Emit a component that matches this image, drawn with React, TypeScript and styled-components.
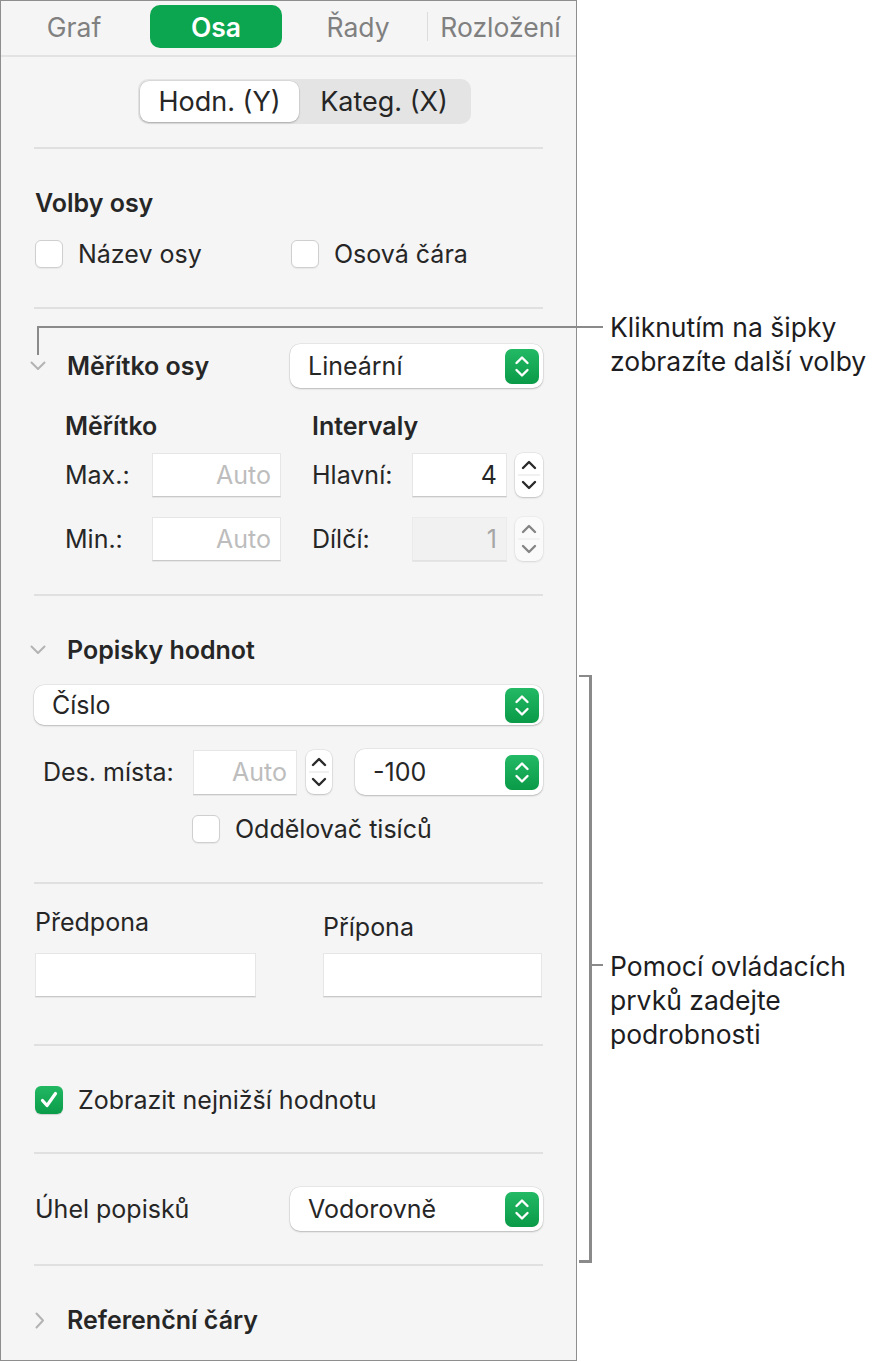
import React from 'react';
import styled, { createGlobalStyle } from 'styled-components';

const GlobalStyle = createGlobalStyle`
  html, body { margin: 0; padding: 0; background: #ffffff; }
  body { font-family: Inter, "Noto Sans", "Liberation Sans", sans-serif; color: #262626; -webkit-font-smoothing: antialiased; }
  * { box-sizing: border-box; }
`;

const Stage = styled.div`
  position: relative;
  width: 884px;
  height: 1362px;
`;

const Panel = styled.div`
  width: 577px;
  height: 1361px;
  border: 1px solid #8e8e8e;
  background: #f5f5f5;
  display: flex;
  flex-direction: column;
`;

const TabBar = styled.div`
  display: flex;
  align-items: center;
  gap: 10px;
  height: 56px;
  padding: 0 6px 0 7px;
  border-bottom: 2px solid #e3e3e3;
`;

const Tab = styled.div<{ $active?: boolean; $grow?: boolean }>`
  width: ${(p) => (p.$grow ? 'auto' : '132px')};
  flex: ${(p) => (p.$grow ? '1' : '0 0 auto')};
  height: 43px;
  margin-top: -3px;
  border-radius: 10px;
  display: flex;
  align-items: center;
  justify-content: center;
  font-size: 26.5px;
  font-weight: ${(p) => (p.$active ? 600 : 400)};
  color: ${(p) => (p.$active ? '#ffffff' : '#808080')};
  background: ${(p) => (p.$active ? '#0ba64f' : 'transparent')};
`;

const TabDivider = styled.div`
  width: 1px;
  height: 29px;
  margin: -3px -7px 0 -7px;
  background: #dcdcdc;
`;

const Content = styled.div`
  display: flex;
  flex-direction: column;
  padding: 0 33px;
`;

const Segmented = styled.div`
  align-self: flex-start;
  margin: 22px 0 0 104px;
  display: flex;
  height: 45px;
  padding: 2px;
  border-radius: 10px;
  background: #e4e4e4;
`;

const Segment = styled.div<{ $selected?: boolean; $w: number }>`
  width: ${(p) => p.$w}px;
  display: flex;
  align-items: center;
  justify-content: center;
  border-radius: 9px;
  font-size: 27px;
  color: #262626;
  background: ${(p) => (p.$selected ? '#ffffff' : 'transparent')};
  box-shadow: ${(p) => (p.$selected ? '0 1px 2px rgba(0,0,0,0.22), 0 0 0 0.5px rgba(0,0,0,0.08)' : 'none')};
`;

const Rule = styled.div<{ $mt: number }>`
  height: 2px;
  margin-top: ${(p) => p.$mt}px;
  background: #e0e0e0;
`;

const Row = styled.div<{ $mt: number; $h: number; $pl?: number }>`
  display: flex;
  align-items: center;
  height: ${(p) => p.$h}px;
  margin-top: ${(p) => p.$mt}px;
  padding-left: ${(p) => p.$pl ?? 0}px;
`;

const SectionTitle = styled.div`
  font-size: 25px;
  font-weight: 600;
  color: #262626;
`;

const Label = styled.div<{ $w?: number }>`
  font-size: 25px;
  color: #262626;
  ${(p) => (p.$w ? `width: ${p.$w}px; flex: 0 0 auto;` : '')}
`;

const CheckItem = styled.div<{ $w?: number }>`
  display: flex;
  align-items: center;
  gap: 15px;
  ${(p) => (p.$w ? `width: ${p.$w}px;` : '')}
`;

const Box = styled.div<{ $checked?: boolean }>`
  width: 28px;
  height: 28px;
  flex: 0 0 auto;
  border-radius: 6px;
  display: flex;
  align-items: center;
  justify-content: center;
  background: ${(p) => (p.$checked ? 'linear-gradient(#22b862, #0b9c4a)' : '#ffffff')};
  border: ${(p) => (p.$checked ? 'none' : '1px solid #cfcfcf')};
  box-shadow: ${(p) => (p.$checked ? '0 1px 1px rgba(0,0,0,0.15)' : '0 1px 1px rgba(0,0,0,0.06)')};
`;

const Disclosure = styled.div<{ $w?: number; $ml?: number }>`
  display: flex;
  align-items: center;
  width: ${(p) => p.$w ?? 37}px;
  margin-left: ${(p) => p.$ml ?? -4}px;
`;

const Popup = styled.div<{ $w?: number }>`
  display: flex;
  align-items: center;
  justify-content: space-between;
  height: 100%;
  ${(p) => (p.$w ? `width: ${p.$w}px;` : 'flex: 1;')}
  margin-left: auto;
  padding: 0 4px 0 18px;
  border-radius: 10px;
  background: #ffffff;
  box-shadow: 0 1px 2px rgba(0,0,0,0.2), 0 0 0 0.5px rgba(0,0,0,0.1);
  font-size: 25px;
  color: #262626;
`;

const GreenButton = styled.div`
  width: 34px;
  height: 35px;
  border-radius: 7px;
  background: linear-gradient(#23b965, #0a9a48);
  display: flex;
  align-items: center;
  justify-content: center;
`;

const ScaleRow = styled.div<{ $mt: number; $h: number }>`
  display: grid;
  grid-template-columns: 87px 129px 31px 100px 95px 8px 28px;
  align-items: center;
  height: ${(p) => p.$h}px;
  margin-top: ${(p) => p.$mt}px;
  padding-left: 31px;
`;

const Spacer = styled.div``;

const Field = styled.div<{ $w?: number; $disabled?: boolean; $h?: number }>`
  height: ${(p) => p.$h ?? 44}px;
  ${(p) => (p.$w ? `width: ${p.$w}px; flex: 0 0 auto;` : 'width: 100%;')}
  display: flex;
  align-items: center;
  justify-content: flex-end;
  padding-right: 9px;
  background: ${(p) => (p.$disabled ? '#f1f1f1' : '#ffffff')};
  border: 1px solid ${(p) => (p.$disabled ? '#ebebeb' : '#e6e6e6')};
  border-bottom: 1px solid ${(p) => (p.$disabled ? '#e2e2e2' : '#c9c9c9')};
  box-shadow: 0 1px 0 rgba(0,0,0,0.06);
  font-size: 25px;
  color: ${(p) => (p.$disabled ? '#a6a6a6' : '#262626')};
`;

const Placeholder = styled.span`
  color: #bdbdbd;
`;

const StepperBox = styled.div<{ $disabled?: boolean; $w?: number; $ml?: number }>`
  width: ${(p) => p.$w ?? 28}px;
  height: 44px;
  flex: 0 0 auto;
  margin-left: ${(p) => p.$ml ?? 0}px;
  border-radius: 8px;
  background: #ffffff;
  box-shadow: 0 1px 2px rgba(0,0,0,0.18), 0 0 0 0.5px rgba(0,0,0,0.1);
  opacity: ${(p) => (p.$disabled ? 0.55 : 1)};
  display: flex;
  align-items: center;
  justify-content: center;
`;

const AffixGrid = styled.div`
  display: grid;
  grid-template-columns: 221px 219px;
  column-gap: 67px;
  margin-top: 23px;
  padding-left: 1px;
`;

const AffixLabel = styled.div<{ $shift?: number }>`
  height: 30px;
  display: flex;
  align-items: center;
  font-size: 25px;
  color: #262626;
  margin-top: ${(p) => p.$shift ?? 0}px;
  margin-bottom: ${(p) => 16 - (p.$shift ?? 0)}px;
`;

const Bottom = styled.div`
  flex: 1;
`;

/* annotation layer */
const Line = styled.div<{ $x: number; $y: number; $w: number; $h: number }>`
  position: absolute;
  left: ${(p) => p.$x}px;
  top: ${(p) => p.$y}px;
  width: ${(p) => p.$w}px;
  height: ${(p) => p.$h}px;
  background: #8a8a8a;
`;

const Callout = styled.div<{ $y: number }>`
  position: absolute;
  left: 610px;
  top: ${(p) => p.$y}px;
  font-family: Inter, "Noto Sans", sans-serif;
  font-size: 26.5px;
  line-height: 34px;
  color: #1d1d1f;
`;

const ChevronDown = () => (
  <svg width="16" height="10" viewBox="0 0 16 10">
    <path d="M1.5 1.5 L8 8 L14.5 1.5" fill="none" stroke="#b3b3b3" strokeWidth="2" strokeLinecap="round" strokeLinejoin="round" />
  </svg>
);

const ChevronRight = () => (
  <svg width="10" height="17" viewBox="0 0 10 17">
    <path d="M1.5 1.5 L8 8.5 L1.5 15.5" fill="none" stroke="#b3b3b3" strokeWidth="2" strokeLinecap="round" strokeLinejoin="round" />
  </svg>
);

const UpDown = () => (
  <svg width="34" height="35" viewBox="0 0 34 35">
    <path d="M11.5 14 L17 8.5 L22.5 14" fill="none" stroke="#ffffff" strokeWidth="2.4" strokeLinecap="round" strokeLinejoin="round" />
    <path d="M11.5 21 L17 26.5 L22.5 21" fill="none" stroke="#ffffff" strokeWidth="2.4" strokeLinecap="round" strokeLinejoin="round" />
  </svg>
);

const StepArrows = ({ w = 28 }: { w?: number }) => (
  <svg width={w} height="44" viewBox={`0 0 ${w} 44`}>
    <path d={`M${w / 2 - 6} 15 L${w / 2} 9 L${w / 2 + 6} 15`} fill="none" stroke="#2a2a2a" strokeWidth="2.4" strokeLinecap="round" strokeLinejoin="round" />
    <line x1="3" y1="22" x2={w - 3} y2="22" stroke="#e2e2e2" strokeWidth="1" />
    <path d={`M${w / 2 - 6} 29 L${w / 2} 35 L${w / 2 + 6} 29`} fill="none" stroke="#2a2a2a" strokeWidth="2.4" strokeLinecap="round" strokeLinejoin="round" />
  </svg>
);

const Check = () => (
  <svg width="22" height="22" viewBox="0 0 22 22">
    <path d="M4.5 11.5 L9 16.5 L17.5 4.5" fill="none" stroke="#ffffff" strokeWidth="3.2" strokeLinecap="round" strokeLinejoin="round" />
  </svg>
);

export default function App() {
  return (
    <Stage>
      <GlobalStyle />
      <Panel>
        <TabBar>
          <Tab>Graf</Tab>
          <Tab $active>Osa</Tab>
          <Tab>Řady</Tab>
          <TabDivider />
          <Tab $grow>Rozložení</Tab>
        </TabBar>
        <Content>
          <Segmented>
            <Segment $selected $w={159}>Hodn. (Y)</Segment>
            <Segment $w={170}>Kateg. (X)</Segment>
          </Segmented>
          <Rule $mt={23} />

          <Row $mt={39} $h={30} $pl={1}>
            <SectionTitle>Volby osy</SectionTitle>
          </Row>
          <Row $mt={16} $h={40} $pl={1}>
            <CheckItem $w={256}>
              <Box />
              <Label>Název osy</Label>
            </CheckItem>
            <CheckItem>
              <Box />
              <Label>Osová čára</Label>
            </CheckItem>
          </Row>
          <Rule $mt={33} />

          <Row $mt={35} $h={44}>
            <Disclosure><ChevronDown /></Disclosure>
            <SectionTitle>Měřítko osy</SectionTitle>
            <Popup $w={253}>
              Lineární
              <GreenButton><UpDown /></GreenButton>
            </Popup>
          </Row>

          <ScaleRow $mt={23} $h={30}>
            <SectionTitle style={{ gridColumn: '1 / 3' }}>Měřítko</SectionTitle>
            <Spacer />
            <SectionTitle style={{ gridColumn: '4 / 8' }}>Intervaly</SectionTitle>
          </ScaleRow>
          <ScaleRow $mt={12} $h={44}>
            <Label>Max.:</Label>
            <Field><Placeholder>Auto</Placeholder></Field>
            <Spacer />
            <Label>Hlavní:</Label>
            <Field>4</Field>
            <Spacer />
            <StepperBox><StepArrows /></StepperBox>
          </ScaleRow>
          <ScaleRow $mt={20} $h={44}>
            <Label>Min.:</Label>
            <Field><Placeholder>Auto</Placeholder></Field>
            <Spacer />
            <Label>Dílčí:</Label>
            <Field $disabled>1</Field>
            <Spacer />
            <StepperBox $disabled><StepArrows /></StepperBox>
          </ScaleRow>
          <Rule $mt={33} />

          <Row $mt={39} $h={30}>
            <Disclosure><ChevronDown /></Disclosure>
            <SectionTitle>Popisky hodnot</SectionTitle>
          </Row>
          <Row $mt={20} $h={40}>
            <Popup>
              Číslo
              <GreenButton><UpDown /></GreenButton>
            </Popup>
          </Row>
          <Row $mt={24} $h={46} $pl={9}>
            <Label $w={150}>Des. místa:</Label>
            <Field $w={104} $h={45}><Placeholder>Auto</Placeholder></Field>
            <StepperBox $w={26} $ml={9}><StepArrows w={26} /></StepperBox>
            <Popup $w={188}>
              -100
              <GreenButton><UpDown /></GreenButton>
            </Popup>
          </Row>
          <Row $mt={19} $h={30} $pl={158}>
            <CheckItem>
              <Box />
              <Label>Oddělovač tisíců</Label>
            </CheckItem>
          </Row>
          <Rule $mt={38} />

          <AffixGrid>
            <div>
              <AffixLabel>Předpona</AffixLabel>
              <Field />
            </div>
            <div>
              <AffixLabel $shift={5}>Přípona</AffixLabel>
              <Field />
            </div>
          </AffixGrid>
          <Rule $mt={47} />

          <Row $mt={39} $h={30} $pl={1}>
            <CheckItem>
              <Box $checked><Check /></Box>
              <Label>Zobrazit nejnižší hodnotu</Label>
            </CheckItem>
          </Row>
          <Rule $mt={37} />

          <Row $mt={33} $h={44} $pl={1}>
            <Label>Úhel popisků</Label>
            <Popup $w={253}>
              Vodorovně
              <GreenButton><UpDown /></GreenButton>
            </Popup>
          </Row>
          <Rule $mt={33} />

          <Row $mt={39} $h={30}>
            <Disclosure $ml={1} $w={32}><ChevronRight /></Disclosure>
            <SectionTitle>Referenční čáry</SectionTitle>
          </Row>
        </Content>
        <Bottom />
      </Panel>

      <Line $x={37} $y={326} $w={566} $h={2} />
      <Line $x={37} $y={326} $w={2} $h={29} />
      <Callout $y={310}>
        Kliknutím na šipky<br />zobrazíte další volby
      </Callout>

      <Line $x={579} $y={675} $w={13} $h={2} />
      <Line $x={589} $y={675} $w={3} $h={588} />
      <Line $x={579} $y={1260} $w={13} $h={3} />
      <Line $x={590} $y={964} $w={13} $h={2} />
      <Callout $y={949}>
        Pomocí ovládacích<br />prvků zadejte<br />podrobnosti
      </Callout>
    </Stage>
  );
}
